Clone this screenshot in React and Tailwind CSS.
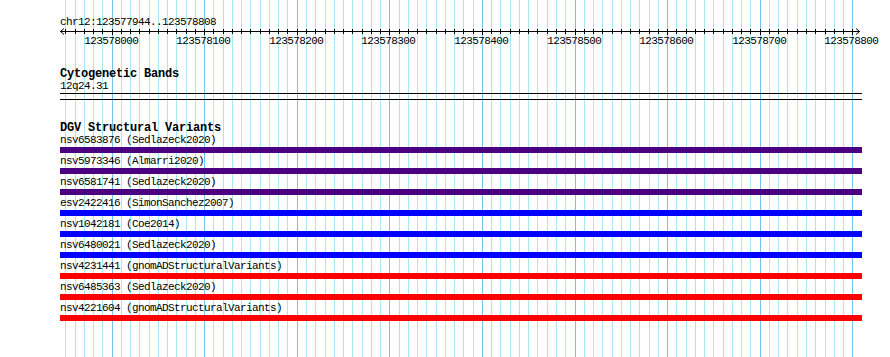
const START = 123577944
const END = 123578808
const SCALE = 800 / (END - START)

// pixel column for a base position
const col = bp => Math.floor(60 + (bp - START) * SCALE + 0.2) + 0.5

const ticks = []
for (let bp = 123577950; bp <= 123578800; bp += 10) ticks.push(bp)

const variants = [
  { id: 'nsv6583876', study: 'Sedlazeck2020', bar: 'bg-[#4b0082]' },
  { id: 'nsv5973346', study: 'Almarri2020', bar: 'bg-[#4b0082]' },
  { id: 'nsv6581741', study: 'Sedlazeck2020', bar: 'bg-[#4b0082]' },
  { id: 'esv2422416', study: 'SimonSanchez2007', bar: 'bg-[#0000ff]' },
  { id: 'nsv1042181', study: 'Coe2014', bar: 'bg-[#0000ff]' },
  { id: 'nsv6480021', study: 'Sedlazeck2020', bar: 'bg-[#0000ff]' },
  { id: 'nsv4231441', study: 'gnomADStructuralVariants', bar: 'bg-[#ff0000]' },
  { id: 'nsv6485363', study: 'Sedlazeck2020', bar: 'bg-[#ff0000]' },
  { id: 'nsv4221604', study: 'gnomADStructuralVariants', bar: 'bg-[#ff0000]' },
]

function Grid() {
  return (
    <svg className="absolute inset-0" width="890" height="357" shapeRendering="crispEdges">
      {ticks.map(bp => (
        <line key={bp} x1={col(bp)} x2={col(bp)} y1="0" y2="357"
          stroke={bp % 100 === 0 ? '#74c2ee' : '#a8e6f0'} strokeWidth="1" />
      ))}
    </svg>
  )
}

function Ruler() {
  return (
    <svg width="890" height="22" className="block" shapeRendering="crispEdges">
      <line x1="60" x2="860" y1="4.5" y2="4.5" stroke="#000" />
      <polyline points="64,1.5 60.5,4.5 64,7.5" fill="none" stroke="#000" shapeRendering="auto" />
      <polyline points="856,1.5 859.5,4.5 856,7.5" fill="none" stroke="#000" shapeRendering="auto" />
      {ticks.map(bp => (
        <line key={bp} x1={col(bp)} x2={col(bp)} y1="2" y2={bp % 100 === 0 ? 8 : 7} stroke="#000" />
      ))}
      {ticks.filter(bp => bp % 100 === 0).map(bp => (
        <text key={bp} x={col(bp) - 1.2} y="17" textAnchor="middle" fill="#000"
          style={{ fontFamily: '"Liberation Mono", monospace', fontSize: 11, letterSpacing: '-0.6px' }}>
          {bp}
        </text>
      ))}
    </svg>
  )
}

export default function App() {
  return (
    <div className="relative w-[890px] h-[357px] bg-white overflow-hidden text-black font-['Liberation_Mono',monospace]">
      <Grid />
      <div className="relative flex flex-col">
        <div className="ml-[60px] mt-[16px] h-[11px] leading-[13px] text-[11px] tracking-[-0.6px] whitespace-pre">
          chr12:123577944..123578808
        </div>
        <Ruler />

        {/* Cytogenetic bands */}
        <div className="ml-[60px] mt-[19px] h-[12px] leading-[12px] text-[12px] font-bold tracking-[-0.2px] whitespace-pre">
          Cytogenetic Bands
        </div>
        <div className="ml-[60px] h-[13px] leading-[13px] text-[11px] tracking-[-0.6px]">12q24.31</div>
        <div className="ml-[60px] w-[802px] h-[7px] border-y border-black" />

        {/* DGV */}
        <div className="ml-[60px] mt-[22px] h-[12px] leading-[12px] text-[12px] font-bold tracking-[-0.2px] whitespace-pre">
          DGV Structural Variants
        </div>
        {variants.map(v => (
          <div key={v.id} className="ml-[60px] w-[802px] flex flex-col mb-[2px]">
            <div className="h-[13px] leading-[13px] text-[11px] tracking-[-0.6px] whitespace-pre">
              {v.id} ({v.study})
            </div>
            <div className={`h-[6px] w-full ${v.bar}`} />
          </div>
        ))}
      </div>
    </div>
  )
}
